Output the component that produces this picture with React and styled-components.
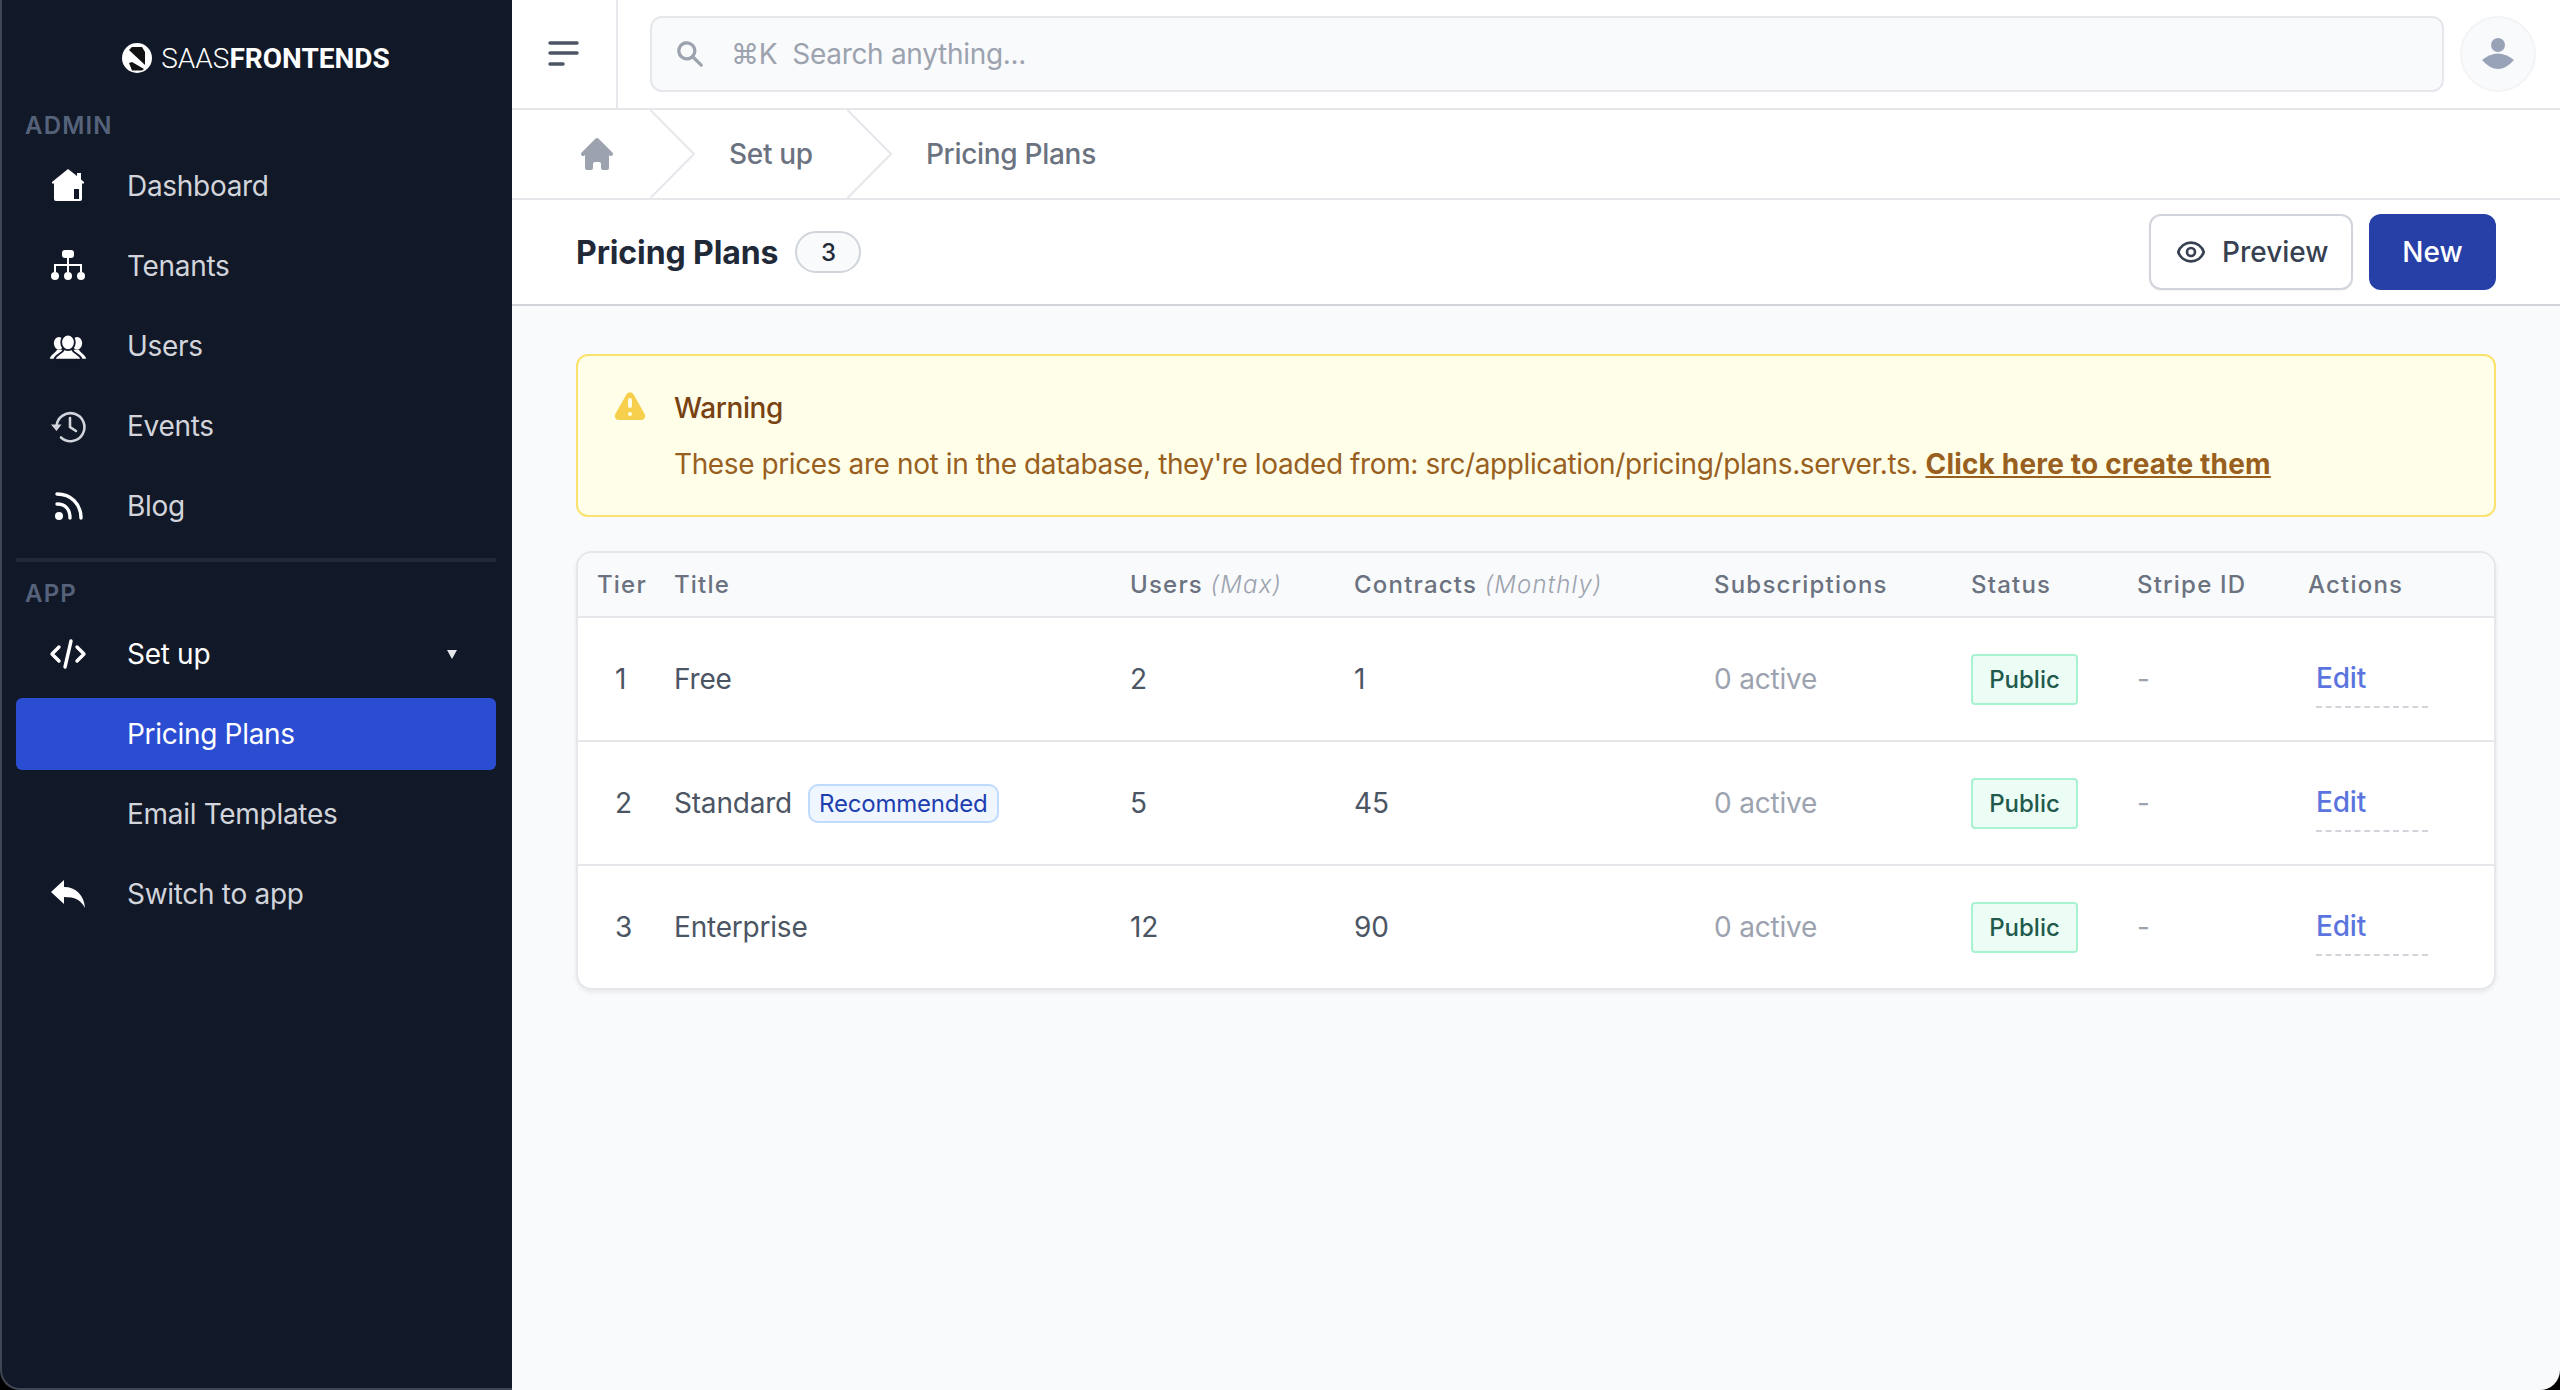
import React from "react";
import styled, { createGlobalStyle } from "styled-components";

const GlobalStyle = createGlobalStyle`
  html, body {
    margin: 0;
    height: 100%;
  }
  body {
    font-family: Inter, "Liberation Sans", sans-serif;
    background: #000;
  }
  * {
    box-sizing: border-box;
  }
`;

const adminItems = [
  { label: "Dashboard", icon: <HomeIcon /> },
  { label: "Tenants", icon: <TenantsIcon /> },
  { label: "Users", icon: <UsersIcon /> },
  { label: "Events", icon: <EventsIcon /> },
  { label: "Blog", icon: <BlogIcon /> },
];

const plans = [
  { tier: 1, title: "Free", users: 2, contracts: 1 },
  { tier: 2, title: "Standard", users: 5, contracts: 45, recommended: true },
  { tier: 3, title: "Enterprise", users: 12, contracts: 90 },
];

function HomeIcon() {
  return (
    <svg width="40" height="40" viewBox="0 0 40 40" fill="#fff">
      <path
        fillRule="evenodd"
        d="M20 3 L29 10 V7 H33 V13.5 L36 16 V17.5 H34 V33 Q34 35 32 35 H8 Q6 35 6 33 V17.5 H4 V16 Z M26 23 V33 H31 V23 Z"
      />
    </svg>
  );
}

function TenantsIcon() {
  return (
    <svg width="40" height="40" viewBox="0 0 40 40" fill="#fff">
      <rect x="14" y="4" width="12" height="8" rx="3" />
      <path d="M19 11 H21 V18 H34 V26 H32 V20 H21 V26 H19 V20 H8 V26 H6 V18 H19 Z" />
      <circle cx="7" cy="30" r="4" />
      <circle cx="20" cy="30" r="4" />
      <circle cx="33" cy="30" r="4" />
    </svg>
  );
}

function UsersIcon() {
  return (
    <svg width="44" height="40" viewBox="0 0 44 40" fill="#fff">
      <ellipse cx="12" cy="17" rx="5.5" ry="7" />
      <ellipse cx="32" cy="17" rx="5.5" ry="7" />
      <path d="M2 34 C3 29 8 28 10 24 H16 V34 Z" />
      <path d="M42 34 C41 29 36 28 34 24 H28 V34 Z" />
      <g stroke="#111827" strokeWidth="2">
        <path d="M7 35 C8 29 16 29 18 23 H26 C28 29 36 29 37 35 Z" />
        <ellipse cx="22" cy="16" rx="7.5" ry="8.5" />
      </g>
    </svg>
  );
}

function EventsIcon() {
  return (
    <svg width="40" height="40" viewBox="0 0 40 40" fill="none" stroke="#d1d5db" strokeWidth="2.6" strokeLinecap="round">
      <path d="M8.5 20 A14 14 0 1 1 13 31.5" />
      <path d="M22 12 V21 L28 25" />
      <path d="M3 18.5 H13.5 L8.5 25 Z" fill="#d1d5db" stroke="none" />
    </svg>
  );
}

function BlogIcon() {
  return (
    <svg width="40" height="40" viewBox="0 0 40 40" fill="none" stroke="#fff" strokeWidth="3.4" strokeLinecap="round">
      <circle cx="11" cy="30" r="4" fill="#fff" stroke="none" />
      <path d="M9 18 C17 18 22 23 22 32" />
      <path d="M9 8 C23 8 33 18 33 32" />
    </svg>
  );
}

function CodeIcon() {
  return (
    <svg width="40" height="40" viewBox="0 0 40 40" fill="none" stroke="#fff" strokeWidth="3.4" strokeLinecap="round" strokeLinejoin="round">
      <path d="M11 13 L4 20 L11 27" />
      <path d="M29 13 L36 20 L29 27" />
      <path d="M23 7 L17 33" />
    </svg>
  );
}

function ReplyIcon() {
  return (
    <svg width="40" height="40" viewBox="0 0 40 40" fill="#fff">
      <path d="M16 6 V13 C28 13 36 21 37 34 C33 26 27 23 16 23 V30 L3 18 Z" />
    </svg>
  );
}

function LogoIcon() {
  return (
    <svg width="30" height="30" viewBox="0 0 30 30">
      <circle cx="15" cy="15" r="15" fill="#fff" />
      <path d="M7 7 L10 4 H20 L23 9 V22 Z" fill="#111" />
      <path d="M7 20 L10 19 L22 26 L20 27.5 H10 Z" fill="#111" />
    </svg>
  );
}

function CrumbChevron() {
  return (
    <svg width="45" height="88" viewBox="0 0 45 88" fill="none" stroke="#e5e7eb" strokeWidth="2">
      <path d="M0.5 0 L44 44 L0.5 88" />
    </svg>
  );
}

function App() {
  return (
    <>
      <GlobalStyle />
      <Page>
        <Sidebar>
          <Logo>
            <LogoIcon />
            <LogoText>
              SAAS<strong>FRONTENDS</strong>
            </LogoText>
          </Logo>
          <SectionLabel>ADMIN</SectionLabel>
          <NavList>
            {adminItems.map((item) => (
              <NavItem key={item.label}>
                <NavIcon>{item.icon}</NavIcon>
                {item.label}
              </NavItem>
            ))}
          </NavList>
          <NavDivider />
          <SectionLabel>APP</SectionLabel>
          <NavList>
            <NavItem $open>
              <NavIcon>
                <CodeIcon />
              </NavIcon>
              Set up
              <Caret />
            </NavItem>
            <NavItem $active>
              <NavIcon />
              Pricing Plans
            </NavItem>
            <NavItem>
              <NavIcon />
              Email Templates
            </NavItem>
            <NavItem>
              <NavIcon>
                <ReplyIcon />
              </NavIcon>
              Switch to app
            </NavItem>
          </NavList>
        </Sidebar>

        <Main>
          <TopBar>
            <MenuButton>
              <svg width="32" height="28" viewBox="0 0 32 28" fill="none" stroke="#4b5563" strokeWidth="3.4" strokeLinecap="round">
                <path d="M3 3 H30" />
                <path d="M3 13 H30" />
                <path d="M3 24 H16" />
              </svg>
            </MenuButton>
            <SearchBox>
              <svg width="32" height="32" viewBox="0 0 20 20" fill="#9ca3af">
                <path
                  fillRule="evenodd"
                  clipRule="evenodd"
                  d="M8 4a4 4 0 100 8 4 4 0 000-8zM2 8a6 6 0 1110.89 3.476l4.817 4.817a1 1 0 01-1.414 1.414l-4.816-4.816A6 6 0 012 8z"
                />
              </svg>
              <Shortcut>⌘K</Shortcut>
              Search anything...
            </SearchBox>
            <Avatar>
              <svg width="36" height="36" viewBox="0 0 36 36" fill="#99a3b8">
                <circle cx="18" cy="9" r="7" />
                <path d="M2 24 Q18 11 34 24 Q26 33 18 33 Q10 33 2 24 Z" />
              </svg>
            </Avatar>
          </TopBar>

          <Breadcrumb>
            <CrumbHome>
              <svg width="40" height="40" viewBox="0 0 20 20" fill="#9ca3af">
                <path d="M10.707 2.293a1 1 0 00-1.414 0l-7 7a1 1 0 001.414 1.414L4 10.414V17a1 1 0 001 1h2a1 1 0 001-1v-2a1 1 0 011-1h2a1 1 0 011 1v2a1 1 0 001 1h2a1 1 0 001-1v-6.586l.293.293a1 1 0 001.414-1.414l-7-7z" />
              </svg>
            </CrumbHome>
            <CrumbChevron />
            <Crumb>Set up</Crumb>
            <CrumbChevron />
            <Crumb>Pricing Plans</Crumb>
          </Breadcrumb>

          <TitleBar>
            <TitleGroup>
              <Title>Pricing Plans</Title>
              <CountBadge>3</CountBadge>
            </TitleGroup>
            <TitleActions>
              <PreviewButton>
                <svg width="32" height="32" viewBox="0 0 24 24" fill="none" stroke="#374151" strokeWidth="2">
                  <path d="M15 12a3 3 0 11-6 0 3 3 0 016 0z" />
                  <path d="M2.458 12C3.732 7.943 7.523 5 12 5c4.478 0 8.268 2.943 9.542 7-1.274 4.057-5.064 7-9.542 7-4.477 0-8.268-2.943-9.542-7z" />
                </svg>
                Preview
              </PreviewButton>
              <NewButton>New</NewButton>
            </TitleActions>
          </TitleBar>

          <Content>
            <Alert>
              <svg width="40" height="40" viewBox="0 0 20 20" fill="#f6d04d">
                <path
                  fillRule="evenodd"
                  clipRule="evenodd"
                  d="M8.257 3.099c.765-1.36 2.722-1.36 3.486 0l5.58 9.92c.75 1.334-.213 2.98-1.742 2.98H4.42c-1.53 0-2.493-1.646-1.743-2.98l5.58-9.92zM11 13a1 1 0 11-2 0 1 1 0 012 0zm-1-8a1 1 0 00-1 1v3a1 1 0 002 0V6a1 1 0 00-1-1z"
                />
              </svg>
              <AlertBody>
                <AlertTitle>Warning</AlertTitle>
                <AlertText>
                  These prices are not in the database, they're loaded from: src/application/pricing/plans.server.ts.{" "}
                  <AlertLink>Click here to create them</AlertLink>
                </AlertText>
              </AlertBody>
            </Alert>

            <TableCard>
              <HeaderRow>
                <span>Tier</span>
                <span>Title</span>
                <span>
                  Users <HeadNote>(Max)</HeadNote>
                </span>
                <span>
                  Contracts <HeadNote>(Monthly)</HeadNote>
                </span>
                <span>Subscriptions</span>
                <span>Status</span>
                <span>Stripe ID</span>
                <span>Actions</span>
              </HeaderRow>
              {plans.map((plan) => (
                <PlanRow key={plan.tier}>
                  <TierCell>{plan.tier}</TierCell>
                  <TitleCell>
                    {plan.title}
                    {plan.recommended && <RecommendedBadge>Recommended</RecommendedBadge>}
                  </TitleCell>
                  <span>{plan.users}</span>
                  <span>{plan.contracts}</span>
                  <MutedCell>0 active</MutedCell>
                  <span>
                    <StatusBadge>Public</StatusBadge>
                  </span>
                  <MutedCell>-</MutedCell>
                  <EditLink>Edit</EditLink>
                </PlanRow>
              ))}
            </TableCard>
          </Content>
        </Main>
      </Page>
    </>
  );
}

export default App;

const Page = styled.div`
  display: flex;
  height: 100vh;
  overflow: hidden;
`;

const Sidebar = styled.aside`
  width: 512px;
  flex-shrink: 0;
  background: #111827;
  border-left: 2px solid #3f4553;
  border-bottom: 2px solid #3f4553;
  border-bottom-left-radius: 20px;
  padding: 0 16px 0 14px;
  color: #d1d5db;
`;

const Logo = styled.div`
  display: flex;
  align-items: center;
  justify-content: center;
  gap: 9px;
  height: 116px;
`;

const LogoText = styled.span`
  font-family: Roboto, Inter, sans-serif;
  font-size: 28px;
  font-weight: 300;
  color: #fff;

  strong {
    font-weight: 700;
  }
`;

const SectionLabel = styled.div`
  height: 20px;
  padding-left: 9px;
  font-size: 24px;
  line-height: 20px;
  font-weight: 600;
  letter-spacing: 1.2px;
  color: #56627a;
`;

const NavList = styled.nav`
  display: flex;
  flex-direction: column;
  gap: 8px;
  margin-top: 14px;
`;

const NavItem = styled.div`
  display: flex;
  align-items: center;
  height: 72px;
  padding-left: 32px;
  border-radius: 6px;
  font-size: 28px;
  letter-spacing: -0.3px;
  color: ${(props) => (props.$active || props.$open ? "#fff" : "#d1d5db")};
  background: ${(props) => (props.$active ? "#2b4dd2" : "transparent")};
`;

const NavIcon = styled.span`
  display: flex;
  align-items: center;
  justify-content: center;
  width: 40px;
  height: 40px;
  margin-right: 39px;
`;

const Caret = styled.span`
  width: 0;
  height: 0;
  margin-left: auto;
  margin-right: 39px;
  border-left: 5px solid transparent;
  border-right: 5px solid transparent;
  border-top: 9px solid #e5e7eb;
`;

const NavDivider = styled.div`
  height: 4px;
  margin: 16px 0 22px;
  background: #1f2937;
`;

const Main = styled.main`
  flex: 1;
  min-width: 0;
  display: flex;
  flex-direction: column;
  overflow: hidden;
  border-bottom-right-radius: 20px;
`;

const TopBar = styled.header`
  display: flex;
  align-items: center;
  height: 110px;
  padding-right: 24px;
  background: #fff;
  border-bottom: 2px solid #e5e7eb;
`;

const MenuButton = styled.div`
  display: flex;
  align-items: center;
  justify-content: center;
  width: 106px;
  height: 100%;
  padding-right: 2px;
  border-right: 2px solid #e5e7eb;
`;

const SearchBox = styled.div`
  flex: 1;
  display: flex;
  align-items: center;
  height: 76px;
  margin: 0 16px 0 32px;
  padding-left: 22px;
  background: #f9fafb;
  border: 2px solid #e5e7eb;
  border-radius: 12px;
  font-size: 28px;
  letter-spacing: -0.3px;
  color: #9ca3af;
`;

const Shortcut = styled.span`
  margin: 0 15px 0 25px;
`;

const Avatar = styled.div`
  display: flex;
  align-items: center;
  justify-content: center;
  width: 76px;
  height: 76px;
  border-radius: 50%;
  background: #f9fafb;
  border: 2px solid #f3f4f6;
`;

const Breadcrumb = styled.nav`
  display: flex;
  align-items: center;
  gap: 34px;
  height: 90px;
  padding-left: 65px;
  background: #fff;
  border-bottom: 2px solid #e5e7eb;
`;

const CrumbHome = styled.span`
  display: flex;
  margin-right: -1px;
`;

const Crumb = styled.span`
  font-size: 28px;
  font-weight: 500;
  letter-spacing: -0.3px;
  color: #6b7280;
`;

const TitleBar = styled.div`
  display: flex;
  align-items: center;
  justify-content: space-between;
  height: 106px;
  padding: 0 64px;
  background: #fff;
  border-bottom: 2px solid #d1d5db;
`;

const TitleGroup = styled.div`
  display: flex;
  align-items: center;
  gap: 17px;
`;

const Title = styled.h1`
  margin: 0;
  font-size: 32px;
  font-weight: 700;
  letter-spacing: -0.1px;
  color: #1f2937;
`;

const CountBadge = styled.span`
  display: flex;
  align-items: center;
  justify-content: center;
  width: 66px;
  height: 42px;
  border: 2px solid #d1d5db;
  border-radius: 21px;
  background: #f9fafb;
  font-size: 24px;
  font-weight: 500;
  color: #1f2937;
`;

const TitleActions = styled.div`
  display: flex;
  gap: 16px;
`;

const BaseButton = styled.button`
  display: flex;
  align-items: center;
  height: 76px;
  border-radius: 12px;
  font-family: inherit;
  font-size: 28px;
  font-weight: 500;
`;

const PreviewButton = styled(BaseButton)`
  gap: 15px;
  width: 204px;
  padding: 0 0 0 24px;
  background: #fff;
  border: 2px solid #d1d5db;
  color: #374151;
  box-shadow: 0 1px 2px rgba(0, 0, 0, 0.05);
`;

const NewButton = styled(BaseButton)`
  justify-content: center;
  width: 127px;
  background: #2740a8;
  border: none;
  color: #fff;
`;

const Content = styled.div`
  flex: 1;
  padding: 48px 64px;
  background: #f9fafb;
`;

const Alert = styled.div`
  display: flex;
  gap: 24px;
  height: 163px;
  padding: 32px;
  background: #fffee8;
  border: 2px solid #fbe16e;
  border-radius: 12px;
`;

const AlertBody = styled.div`
  display: flex;
  flex-direction: column;
  gap: 16px;
  font-size: 28px;
  line-height: 40px;
  letter-spacing: -0.4px;
`;

const AlertTitle = styled.div`
  font-weight: 500;
  color: #784213;
`;

const AlertText = styled.div`
  color: #985f1f;
`;

const AlertLink = styled.a`
  font-weight: 700;
  letter-spacing: 0.18px;
  text-decoration: underline;
`;

const TableCard = styled.div`
  margin-top: 34px;
  border: 2px solid #e5e7eb;
  border-radius: 16px;
  overflow: hidden;
  background: #fff;
  box-shadow: 0 2px 4px rgba(0, 0, 0, 0.08);
`;

const Row = styled.div`
  display: grid;
  grid-template-columns: 77px 456px 224px 360px 257px 166px 171px 1fr;
  align-items: center;
  padding-left: 19px;
`;

const HeaderRow = styled(Row)`
  height: 65px;
  background: #f9fafb;
  border-bottom: 2px solid #e5e7eb;
  font-size: 24px;
  font-weight: 500;
  letter-spacing: 1.2px;
  color: #6b7280;
`;

const HeadNote = styled.em`
  font-weight: 300;
  color: #9ca3af;
`;

const PlanRow = styled(Row)`
  height: 124px;
  border-bottom: 2px solid #e5e7eb;
  font-size: 28px;
  letter-spacing: -0.2px;
  color: #4b5563;

  &:last-child {
    height: 122px;
    border-bottom: none;
  }
`;

const TierCell = styled.span`
  padding-left: 18px;
`;

const TitleCell = styled.span`
  display: flex;
  align-items: center;
  gap: 16px;
`;

const RecommendedBadge = styled.span`
  display: flex;
  align-items: center;
  height: 39px;
  padding: 0 9px;
  background: #eff6ff;
  border: 2px solid #bfdbfe;
  border-radius: 10px;
  font-size: 24px;
  color: #1e40af;
`;

const MutedCell = styled.span`
  color: #9ca3af;
`;

const StatusBadge = styled.span`
  display: inline-flex;
  align-items: center;
  justify-content: center;
  width: 107px;
  height: 51px;
  background: #ecfdf5;
  border: 2px solid #a7f3d0;
  border-radius: 4px;
  font-size: 24px;
  font-weight: 500;
  letter-spacing: 0;
  color: #22594d;
`;

const EditLink = styled.a`
  width: 112px;
  margin-left: 8px;
  padding: 8px 0;
  border-bottom: 2px dashed #d1d5db;
  line-height: 40px;
  font-weight: 500;
  color: #5c75de;
`;
